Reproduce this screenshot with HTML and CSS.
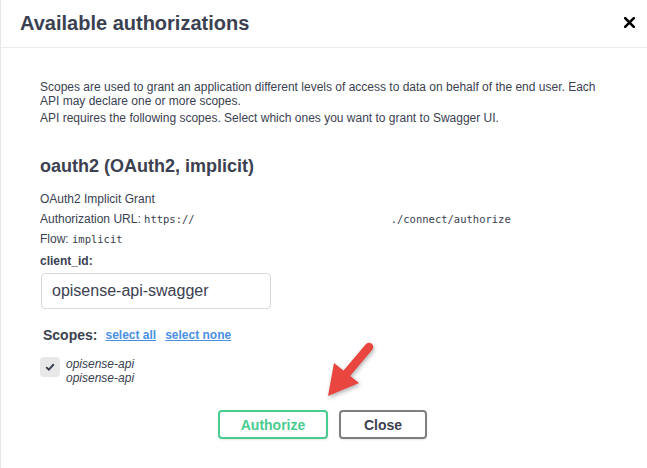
FILE: index.html
```html
<!DOCTYPE html>
<html>
<head>
<meta charset="utf-8">
<link rel="stylesheet" href="styles.css">
</head>
<body>
<div class="modal">
  <div class="modal-header">
    <h3 class="modal-title">Available authorizations</h3>
    <button class="close-modal" aria-label="Close">
      <svg width="11" height="11" viewBox="0 0 11 11"><path d="M1.2 1.2L9.8 9.8M9.8 1.2L1.2 9.8" stroke="#000" stroke-width="2.6" stroke-linecap="square"/></svg>
    </button>
  </div>
  <div class="modal-content">
    <div class="intro">
      <p class="text">Scopes are used to grant an application different levels of access to data on behalf of the end user. Each API may declare one or more scopes.</p>
      <p class="text">API requires the following scopes. Select which ones you want to grant to Swagger UI.</p>
    </div>
    <div class="auth-container">
      <h4 class="auth-title">oauth2 (OAuth2, implicit)</h4>
      <p class="text">OAuth2 Implicit Grant</p>
      <p class="text">Authorization URL: <code class="code">https://</code><span class="redacted"></span><code class="code">./connect/authorize</code></p>
      <p class="text">Flow: <code class="code">implicit</code></p>
      <label class="field-label">client_id:</label>
      <input class="text-input" type="text" value="opisense-api-swagger">
      <div class="scopes-head">
        <h2 class="scopes-title">Scopes:</h2>
        <a class="scope-link">select all</a>
        <a class="scope-link">select none</a>
      </div>
      <div class="scope-row">
        <span class="checkbox">
          <svg width="10" height="8" viewBox="0 0 10 8"><path d="M1.2 4.1L3.8 6.6L8.8 1.3" fill="none" stroke="#3b4151" stroke-width="2"/></svg>
        </span>
        <div class="scope-text">
          <div>opisense-api</div>
          <div>opisense-api</div>
        </div>
      </div>
      <div class="btn-wrapper">
        <button class="btn btn-authorize">Authorize</button>
        <button class="btn btn-close">Close</button>
      </div>
    </div>
  </div>
  <svg class="arrow" width="70" height="80" viewBox="300 330 70 80">
    <g class="arrow-shape">
      <line x1="368" y1="347" x2="346" y2="373" stroke="#e8463f" stroke-width="8.5" stroke-linecap="round"/>
      <polygon points="327,396 333,363 358,383" fill="#e8463f"/>
    </g>
  </svg>
</div>
</body>
</html>
```
FILE: styles.css
```css
* { box-sizing: border-box; }
html, body { margin: 0; padding: 0; background: #fff; }
body { font-family: "Liberation Sans", Arial, sans-serif; color: #3b4151; }

.modal {
  position: relative;
  width: 647px;
  height: 468px;
  border-left: 1px solid #e6e6e6;
  overflow: hidden;
}

.modal-header {
  display: flex;
  align-items: center;
  padding: 12px 0;
  border-bottom: 1px solid #ededed;
  height: 48px;
}
.modal-title {
  flex: 1;
  margin: 0;
  padding: 0 19px;
  font-size: 20px;
  font-weight: 700;
  color: #3b4151;
}
.close-modal {
  background: none;
  border: none;
  padding: 0;
  margin-right: 12px;
  margin-top: -3px;
  width: 11px;
  height: 11px;
  display: flex;
}

.modal-content { padding: 32px 0 0 39px; }

.text {
  margin: 0 0 5px;
  font-size: 12px;
  line-height: 14px;
  color: #3b4151;
  max-width: 570px;
}
.intro .text { margin-bottom: 3px; }
.code {
  font-family: "DejaVu Sans Mono", monospace;
  font-size: 10.5px;
  color: #3b4151;
}
.redacted { display: inline-block; width: 196px; }

.auth-container { padding-top: 28px; }
.auth-title {
  margin: 0 0 16px;
  font-size: 18px;
  line-height: 20px;
  font-weight: 700;
}
.auth-container .text { margin-bottom: 6px; }

.field-label {
  display: block;
  margin-top: 8px;
  font-size: 12px;
  line-height: 14px;
  font-weight: 700;
}
.text-input {
  display: block;
  margin: 5px 0 0 1px;
  width: 230px;
  height: 36px;
  padding: 8px 10px;
  border: 1px solid #d9d9d9;
  border-radius: 4px;
  background: #fff;
  font-family: "Liberation Sans", Arial, sans-serif;
  font-size: 16px;
  color: #3b4151;
  outline: none;
}

.scopes-head {
  display: flex;
  align-items: center;
  margin-top: 18px;
  height: 16px;
}
.scopes-title {
  margin: 0 0 0 3px;
  font-size: 14px;
  font-weight: 700;
  color: #3b4151;
}
.scope-link {
  margin-left: 8px;
  font-size: 12px;
  font-weight: 700;
  color: #4990e2;
  text-decoration: underline;
  cursor: pointer;
}
.scope-link + .scope-link { margin-left: 9px; }

.scope-row {
  display: flex;
  align-items: flex-start;
  margin-top: 14px;
}
.checkbox {
  width: 20px;
  height: 20px;
  border-radius: 4px;
  background: #e8e8e8;
  display: flex;
  align-items: center;
  justify-content: center;
}
.scope-text {
  margin-left: 6px;
  font-size: 12px;
  line-height: 14px;
  font-style: italic;
  color: #3b4151;
}

.btn-wrapper {
  display: flex;
  justify-content: center;
  gap: 11px;
  margin-top: 25px;
  margin-left: -42px;
}
.btn {
  height: 29px;
  border: 2px solid #808080;
  border-radius: 4px;
  background: transparent;
  font-family: "Liberation Sans", Arial, sans-serif;
  font-size: 14px;
  font-weight: 700;
  box-shadow: 0 1px 2px rgba(0, 0, 0, 0.1);
  padding: 0;
}
.btn-authorize { width: 110px; color: #49cc90; border-color: #49cc90; }
.btn-close { width: 88px; color: #3b4151; border-color: #7f7f7f; }

.arrow {
  position: absolute;
  left: 300px;
  top: 330px;
  overflow: visible;
}
.arrow-shape { filter: drop-shadow(1px 2px 2px rgba(0, 0, 0, 0.3)); }
```
